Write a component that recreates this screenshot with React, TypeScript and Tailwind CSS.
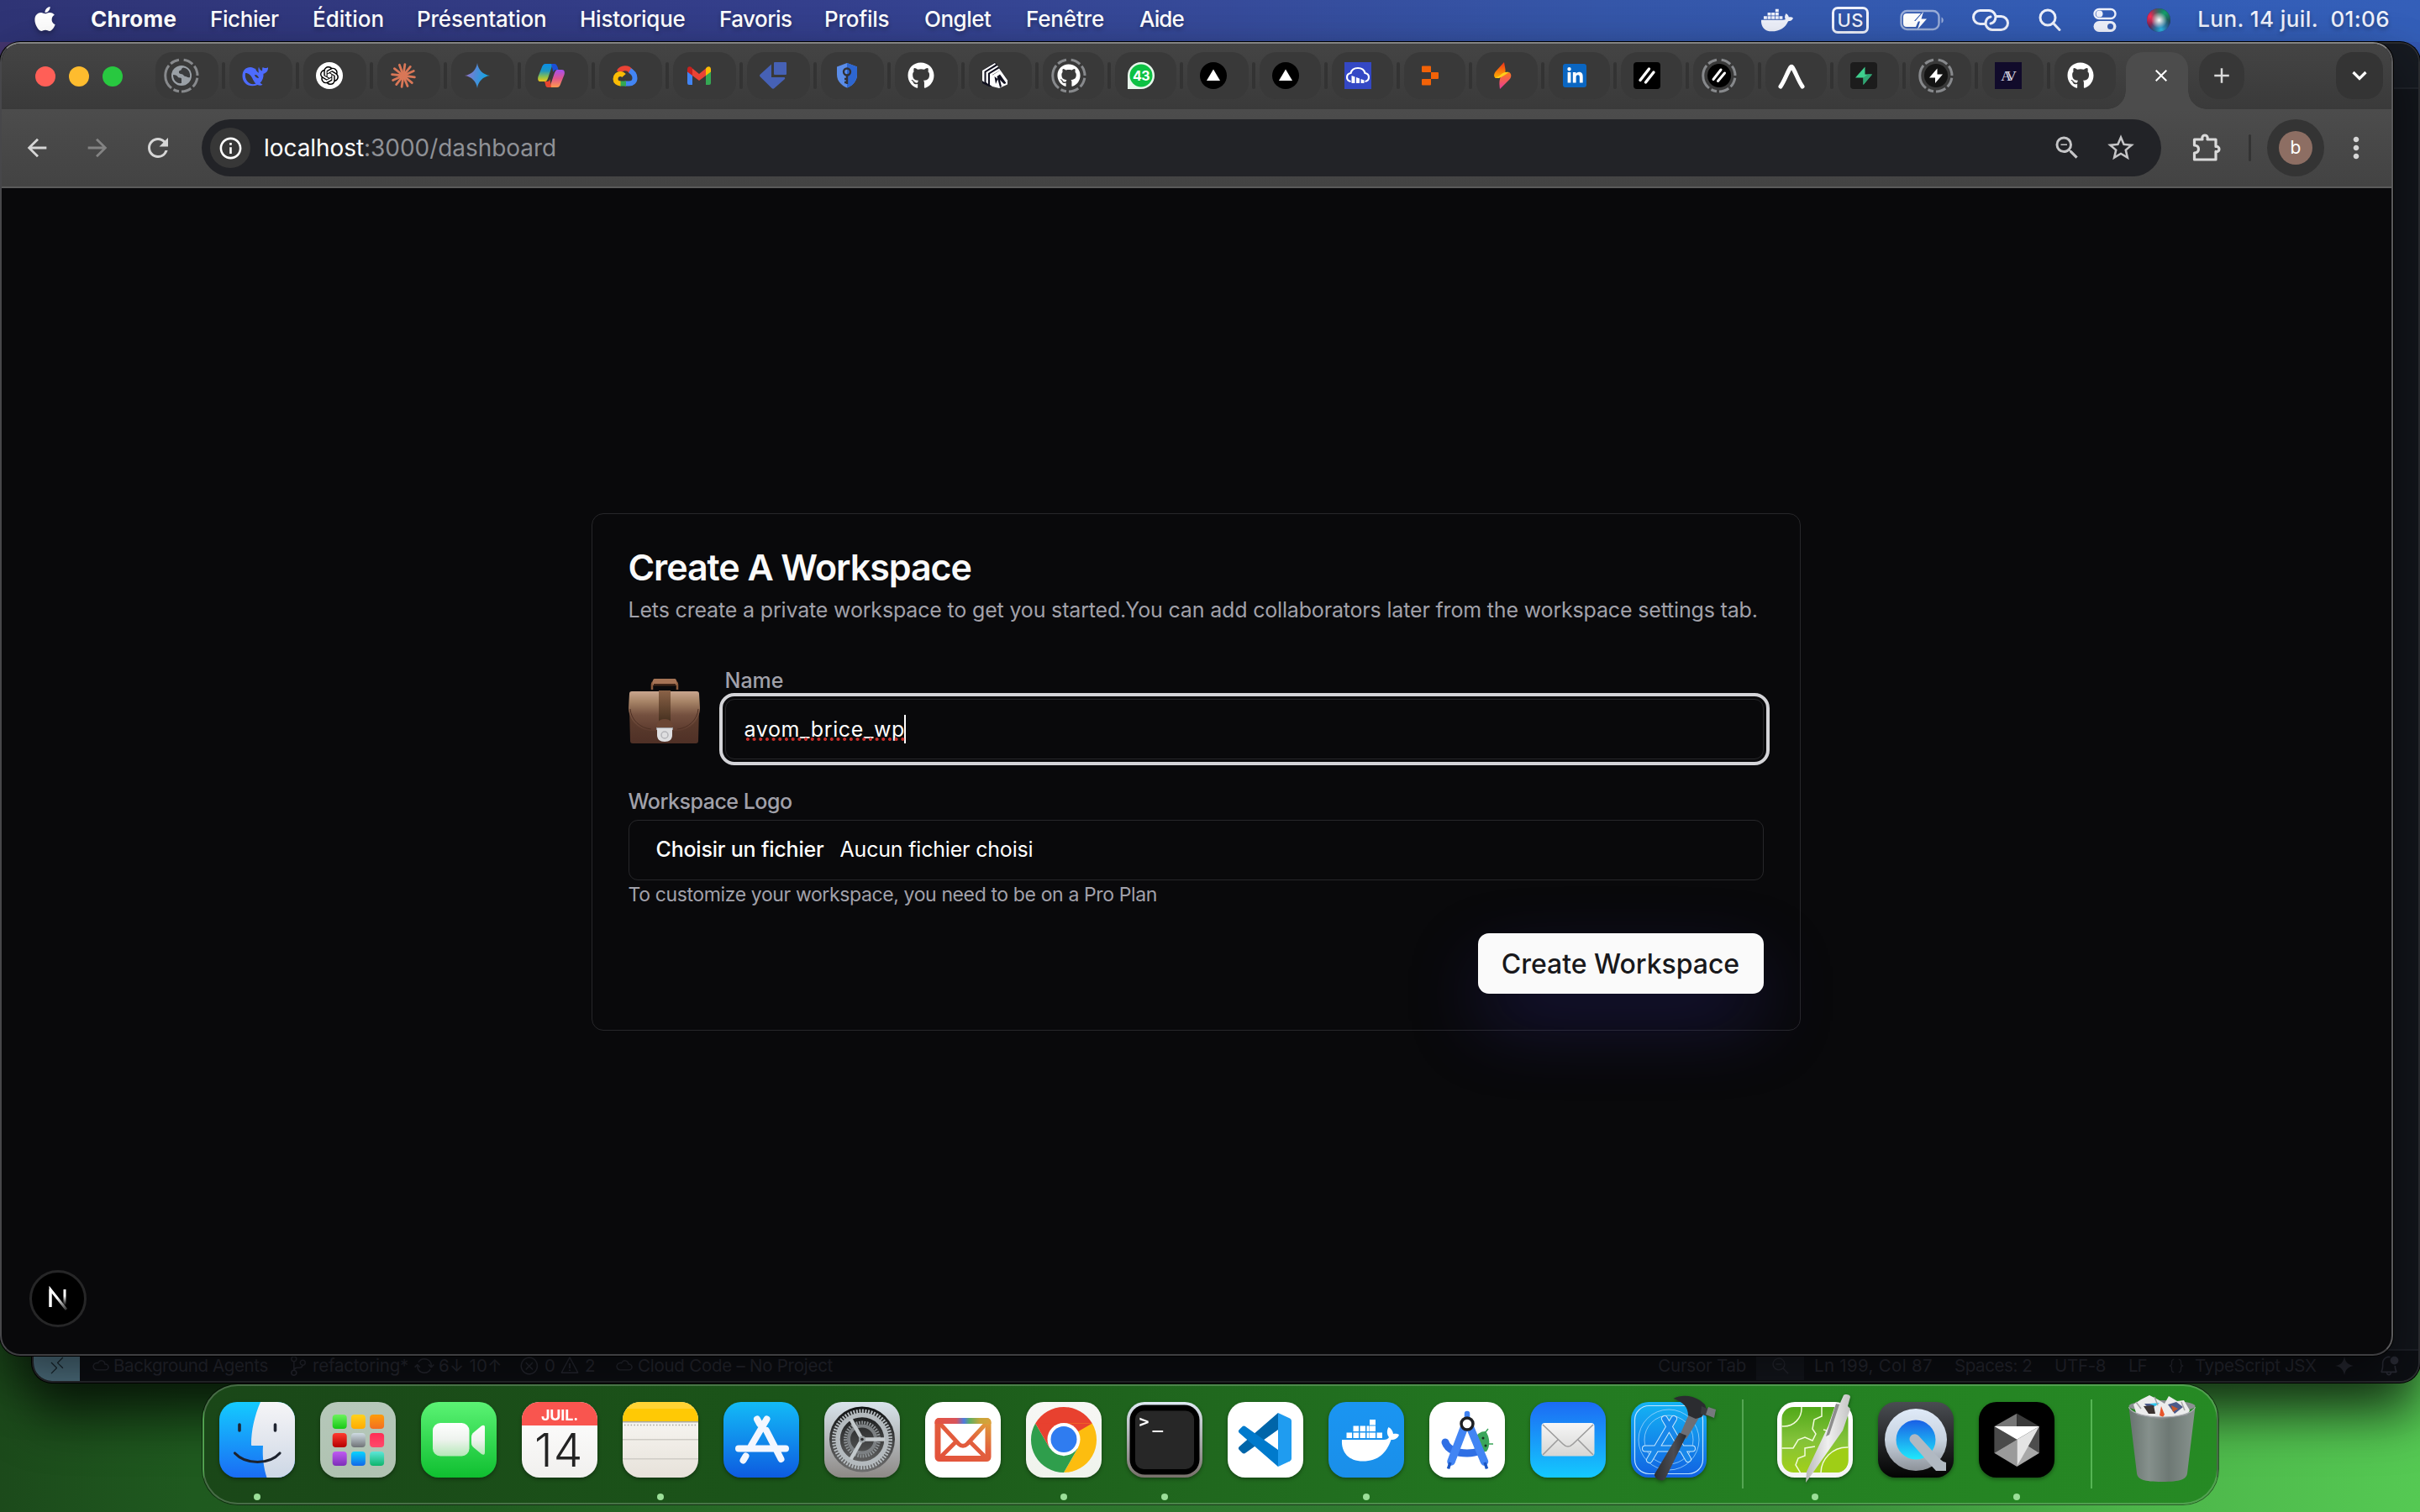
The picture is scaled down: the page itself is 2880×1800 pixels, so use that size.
import type { ReactNode } from "react";
import { FaApple, FaGithub, FaLinkedinIn, FaDocker } from "react-icons/fa";
import { SiOpenai } from "react-icons/si";
import {
  MdArrowBack,
  MdArrowForward,
  MdRefresh,
  MdInfoOutline,
  MdZoomOut,
  MdStarBorder,
  MdMoreVert,
  MdClose,
  MdAdd,
} from "react-icons/md";
import {
  VscRemote,
  VscCloud,
  VscSourceControl,
  VscSync,
  VscError,
  VscWarning,
  VscZoomOut,
  VscJson,
  VscBellDot,
} from "react-icons/vsc";

/* ---------- Menu bar ---------- */

const menus = [
  { label: "Chrome", cls: "w-[142px] font-bold tracking-[0.29px]" },
  { label: "Fichier", cls: "w-[122px] tracking-[-0.39px]" },
  { label: "Édition", cls: "w-[124px] tracking-[0.02px]" },
  { label: "Présentation", cls: "w-[194px] tracking-[-0.21px]" },
  { label: "Historique", cls: "w-[166px] tracking-[-0.26px]" },
  { label: "Favoris", cls: "w-[125px] tracking-[-0.53px]" },
  { label: "Profils", cls: "w-[119px] tracking-[-0.25px]" },
  { label: "Onglet", cls: "w-[121px] tracking-[-0.5px]" },
  { label: "Fenêtre", cls: "w-[135px] tracking-[-0.16px]" },
  { label: "Aide", cls: "w-[60px] tracking-[-0.9px]" },
];

function MenuBar() {
  return (
    <div className="flex h-[50px] w-full items-start bg-[linear-gradient(90deg,#2f3475_0%,#343f8c_33%,#364a99_50%,#3556a8_66%,#335cb4_85%,#345fb9_100%)] text-[26px] font-medium leading-[46px] text-white [text-shadow:0_3px_5px_rgba(0,0,0,0.3)]">
      <div className="w-[108px] pl-[38px] pt-[6px]">
        <FaApple className="h-[33px] w-[31px] drop-shadow-[0_3px_3px_rgba(0,0,0,0.3)]" />
      </div>
      {menus.map((m) => (
        <span key={m.label} className={`block whitespace-nowrap ${m.cls}`}>
          {m.label}
        </span>
      ))}
      <div className="ml-auto flex h-[48px] items-center pr-[36px] text-[#eef1fb]">
        <FaDocker className="mr-[46px] h-[40px] w-[38px]" />
        <div className="mr-[37px] flex h-[32px] w-[44px] items-center justify-center rounded-[7px] border-[3px] border-[#eef1fb] text-[22px] tracking-[0.5px]">
          US
        </div>
        <svg className="mr-[32px]" width="54" height="28" viewBox="0 0 54 28" fill="none">
          <rect x="1.5" y="3" width="45" height="22" rx="7" stroke="#fff" strokeOpacity=".5" strokeWidth="2.4" />
          <path d="M49.5 10.5c3 1 3 6 0 7z" fill="#fff" fillOpacity=".5" />
          <path d="M8 6h17l-8 9h5l-3 7H8a4 4 0 0 1-4-4v-8a4 4 0 0 1 4-4z" fill="#fff" />
          <path d="M28 4 18 15.500h6L21 25l11-12.500h-6.500z" fill="#fff" />
        </svg>
        <svg className="mr-[34px]" width="44" height="28" viewBox="0 0 44 28" fill="none" stroke="#eef1fb" strokeWidth="3" strokeLinecap="round">
          <path d="M15 18.500H9.500a8 8 0 0 1 0-16H20a8 8 0 0 1 7.500 10.500c-.8 2.500-3 4.500-5.500 5" />
          <path d="M29 9.500h5.500a8 8 0 0 1 0 16H24a8 8 0 0 1-7.500-10.500c.8-2.500 3-4.500 5.500-5" />
        </svg>
        <svg className="mr-[38px]" width="28" height="28" viewBox="0 0 28 28" fill="none" stroke="#eef1fb" strokeWidth="3" strokeLinecap="round">
          <circle cx="12" cy="11" r="9" />
          <path d="m18.500 17.500 7.500 8" />
        </svg>
        <svg className="mr-[35px]" width="28" height="30" viewBox="0 0 28 30">
          <rect x="1.500" y="2" width="25" height="11" rx="5.500" fill="none" stroke="#eef1fb" strokeWidth="2.400" />
          <circle cx="7.500" cy="7.500" r="4" fill="#eef1fb" />
          <rect x="0.500" y="16" width="27" height="13" rx="6.500" fill="#eef1fb" />
          <circle cx="20.500" cy="22.500" r="3.500" fill="#3a60b5" />
        </svg>
        <svg className="mr-[31px]" width="30" height="30" viewBox="0 0 30 30">
          <defs>
            <radialGradient id="siriR" cx=".15" cy=".35" r=".6"><stop offset="0" stopColor="#ff2d55" /><stop offset="1" stopColor="#ff2d55" stopOpacity="0" /></radialGradient>
            <radialGradient id="siriG" cx=".75" cy=".2" r=".6"><stop offset="0" stopColor="#12a36c" /><stop offset="1" stopColor="#12a36c" stopOpacity="0" /></radialGradient>
            <radialGradient id="siriB" cx=".6" cy=".9" r=".5"><stop offset="0" stopColor="#2bb8e8" /><stop offset="1" stopColor="#2bb8e8" stopOpacity="0" /></radialGradient>
            <radialGradient id="siriW" cx=".52" cy=".5" r=".34"><stop offset="0" stopColor="#fff" /><stop offset="1" stopColor="#fff" stopOpacity="0" /></radialGradient>
          </defs>
          <circle cx="15" cy="15" r="14" fill="#2a2352" />
          <circle cx="15" cy="15" r="14" fill="url(#siriR)" />
          <circle cx="15" cy="15" r="14" fill="url(#siriG)" />
          <circle cx="15" cy="15" r="14" fill="url(#siriB)" />
          <circle cx="15" cy="15" r="14" fill="url(#siriW)" />
        </svg>
        <span className="-mt-[2px] whitespace-pre tracking-[0.4px]">Lun. 14 juil.{"  "}01:06</span>
      </div>
    </div>
  );
}

/* ---------- Favicons ---------- */

function Ring() {
  return (
    <svg className="absolute -left-[5px] -top-[5px]" width="42" height="42" viewBox="0 0 42 42" fill="none">
      <path d="M18 2.200A19 19 0 0 0 18 39.800" stroke="#87898c" strokeWidth="3" strokeDasharray="11 3 30 3" />
      <circle cx="21" cy="21" r="19" stroke="#87898c" strokeWidth="3" strokeDasharray="11.900 3 11.900 3 11.900 3 11.900 100" transform="rotate(-82 21 21)" />
    </svg>
  );
}

const Sv = ({ children }: { children: ReactNode }) => (
  <svg width="32" height="32" viewBox="0 0 32 32">{children}</svg>
);

const Vercel = () => (
  <Sv>
    <circle cx="16" cy="16" r="16" fill="#000" />
    <path d="M16 8.500 24 22H8z" fill="#fff" />
  </Sv>
);

const Github = () => <FaGithub className="h-[32px] w-[32px] text-white" />;

const favicons: ReactNode[] = [
  <>
    <Ring />
    <Sv>
      <circle cx="16" cy="16" r="12" fill="#9aa0a6" />
      <path d="M6 15c3 0 5 1 6 3 1 1 3 0 4 1.500V25c-5 1-10-3-10-10zM18 6.500c-3 1-1 3-4 3.500-2 1-1 4 1 4 4 0 3 3 6 3 2 0 2 2 5 1 1-5-2-11-8-11.500z" fill="#3a3b3d" />
    </Sv>
  </>,
  <Sv>
    <path d="M20 5.500c.5 2.500 2 4.500 4 5 .5-1.700-.3-3 .8-4.500 1.400 1.500 3.500 1.300 6.200.2.300 4-2 6.800-5.500 7.500.3 4.500-1 8-4 11l3 2c-1.500 1.200-4 1.300-6 .3C9 31 .5 25.500.5 16.500.5 10 4.500 6 10 6c2.500 0 4 1.500 6 1.800l1 2.200c1 1.500 2 2 3 2.800-.5-2.500-1-5 0-7.300z" fill="#4d6bfe" />
    <path d="M4 13c4 0 6.500 2.500 8 5.500s2.500 5.500 4.500 7C10 28.500 2.500 22 4 13z" fill="#393939" />
    <path d="M15 15c2.500-.5 4.500 1.500 5 4-2.500 0-4.500-1.500-5-4z" fill="#393939" />
  </Sv>,
  <div className="flex h-[32px] w-[32px] items-center justify-center rounded-full bg-white text-black">
    <SiOpenai className="h-[22px] w-[22px]" />
  </div>,
  <Sv>
    <g stroke="#d97757" strokeWidth="2.800" strokeLinecap="round">
      {[0, 30, 58, 90, 122, 150, 180, 210, 238, 268, 300, 332].map((a) => (
        <path key={a} d="M16 16V2.500" transform={`rotate(${a + 8} 16 16)`} />
      ))}
    </g>
  </Sv>,
  <Sv>
    <defs><linearGradient id="gem" x1="0" y1=".4" x2="1" y2=".6"><stop offset=".1" stopColor="#8b78cf" /><stop offset=".4" stopColor="#5489d6" /><stop offset=".8" stopColor="#1ba1e3" /></linearGradient></defs>
    <path d="M16 1c1 8 7 14 15 15-8 1-14 7-15 15-1-8-7-14-15-15C9 15 15 9 16 1z" fill="url(#gem)" />
  </Sv>,
  <Sv>
    <defs>
      <linearGradient id="cpA" x1="0" y1="0" x2="0" y2="1"><stop offset="0" stopColor="#0a8fe8" /><stop offset=".4" stopColor="#1c96c0" /><stop offset=".75" stopColor="#8fc14a" /><stop offset="1" stopColor="#f5c518" /></linearGradient>
      <linearGradient id="cpB" x1="0" y1="0" x2="0" y2="1"><stop offset="0" stopColor="#a44ff2" /><stop offset=".5" stopColor="#e0568c" /><stop offset="1" stopColor="#ff9a4d" /></linearGradient>
    </defs>
    <path d="M20 2h-9c-3 0-4 2-5 5L2 17c-1 4 0 6 3 6h5c2 0 3-2 4-5l4-12c.5-2 1-4 2-4z" transform="translate(-1.500 0)" fill="url(#cpA)" />
    <path d="M12 30h9c3 0 4-2 5-5l4-10c1-4 0-6-3-6h-5c-2 0-3 2-4 5l-4 12c-.5 2-1 4-2 4z" transform="translate(1.500 0)" fill="url(#cpB)" />
    <path d="M16 2h4c2 0 3 2 4 5l.5 2H22c-2 0-3 1-3.500 3z" fill="#1b4fd6" />
    <path d="M16 30h-4c-2 0-3-2-3-4l-1-3h3c2 0 3-1 3.500-3z" fill="#e8452f" />
  </Sv>,
  <Sv>
    <g fill="none" strokeWidth="6">
      <path d="M8.500 11.500A8.500 8.500 0 0 1 23 11" stroke="#ea4335" />
      <path d="M23 11c4 2 6 5.500 6 9 0 4-3 6.500-7 6.500h-5" stroke="#4285f4" transform="translate(-1.500 -1)" />
      <path d="M17 25.500H9.500" stroke="#34a853" />
      <path d="M10.500 25.500c-3 0-6-2-6-5.500 0-4 3-6 6-6 1.500 0 3 .8 4 2" stroke="#fbbc04" />
    </g>
  </Sv>,
  <Sv>
    <path d="M2 27V8l6 5v14H4a2 2 0 0 1-2-2z" fill="#4285f4" />
    <path d="M30 27V8l-6 5v14h4a2 2 0 0 0 2-2z" fill="#34a853" />
    <path d="M24 7.500V16l6-4.500V8.500c0-4-4-4.500-6-1z" fill="#fbbc04" />
    <path d="M8 16V7.500l8 6.500 8-6.500V16l-8 6z" fill="#ea4335" />
    <path d="M2 8.500v3L8 16V7.500C6 4 2 5 2 8.500z" fill="#c5221f" />
  </Sv>,
  <Sv>
    <path d="M14 2.500V18h15c1 0 1.500 1 1 2L17.500 31c-1 1-2 1-3 0L.8 17.500c-1-1-1-2 0-3z" fill="#4661b5" />
    <rect x="17" y="0" width="15" height="15" rx="1" fill="#4661b5" />
  </Sv>,
  <Sv>
    <path d="M16 1 28 5.500V15c0 8-6 13-12 15.500C10 28 4 23 4 15V5.500z" fill="#5b8de8" />
    <path d="M16 1 28 5.500V15c0 8-6 13-12 15.500z" fill="#2d66d0" />
    <circle cx="16" cy="11.500" r="4" fill="none" stroke="#303136" strokeWidth="2.400" />
    <path d="M16 15.500V26m0-6h-3m3 4h-3" fill="none" stroke="#303136" strokeWidth="2.400" />
  </Sv>,
  <Github />,
  <Sv>
    <path d="M1 10 16 0l15 21v5l-10 5-8-2H9L1 25z" fill="#10101f" />
    <path d="M1 10 16 1l1 1.500L3.500 11v13L1 22zM5.500 12 19 4l1 1.500L8 13v13l-2.500-2zM10 14 21 7.500l1.500 2L13 15v14l-3-2z" fill="#fff" />
    <path d="m13 15.500 9.500-6L31 21.500v5L21 31l-8-2z" fill="#fff" />
    <path d="m15.500 17 1.500 9 2.500-6zM22 14.500l-3.500 2.500L22 30l2-1-2-8 5 5 2.500-1z" fill="#10101f" />
  </Sv>,
  <>
    <Ring />
    <div className="flex h-[32px] w-[32px] items-center justify-center"><FaGithub className="h-[28px] w-[28px] text-white" /></div>
  </>,
  <div className="relative">
    <Sv>
      <path d="M16 0a16 16 0 1 1 0 32H0V16A16 16 0 0 1 16 0z" fill="#e8f7ec" />
      <circle cx="16" cy="16" r="13.500" fill="#0dc143" />
    </Sv>
    <span className="absolute inset-0 flex items-center justify-center text-[16px] font-bold tracking-[-0.5px] text-white">43</span>
  </div>,
  <Vercel />,
  <Vercel />,
  <Sv>
    <rect width="32" height="32" fill="#3448c5" />
    <path d="M7.500 23c-6-1-6-9 0-10 2-8 15-8 17 0 6 1 6 9 0 10" fill="none" stroke="#fff" strokeWidth="2.200" />
    <path d="M8.500 16v9h4v-7.500zM14 18v7h4v-5.500zM19.500 20v5h4v-3.500z" fill="#fff" />
  </Sv>,
  <Sv>
    <path d="M7 4.500h9a1 1 0 0 1 1 1V12H7a1 1 0 0 1-1-1V5.500a1 1 0 0 1 1-1zM17 12h8a1 1 0 0 1 1 1v6a1 1 0 0 1-1 1h-8zM7 20h10v6.500a1 1 0 0 1-1 1H7a1 1 0 0 1-1-1V21a1 1 0 0 1 1-1z" fill="#f26207" />
  </Sv>,
  <Sv>
    <defs>
      <linearGradient id="fl1" x1="0" y1="0" x2="0" y2="1"><stop offset="0" stopColor="#ef2d1a" /><stop offset="1" stopColor="#ffb400" /></linearGradient>
      <linearGradient id="fl2" x1="0" y1="0" x2="0" y2="1"><stop offset="0" stopColor="#ff7a1a" /><stop offset="1" stopColor="#e83a9a" /></linearGradient>
    </defs>
    <path d="M18 0 8 11c-3 4-2 7 0 8l10-4c3-4 1-8 0-15z" fill="url(#fl1)" />
    <path d="M13 32 24 21c4-4 2-8 0-9l-9 4c-3 4-3 9-2 16z" fill="url(#fl2)" />
    <path d="M7 18c3 2 6 1 9-1s5-3 8-5c-5-1-8 1-10 3s-4 3-7 3z" fill="#ffcf1a" />
  </Sv>,
  <div className="flex h-[32px] w-[32px] items-center justify-center">
    <div className="flex h-[28px] w-[28px] items-center justify-center rounded-[3px] bg-[#0a66c2]">
      <FaLinkedinIn className="h-[21px] w-[21px] text-white" />
    </div>
  </div>,
  <Sv>
    <rect width="32" height="32" rx="4" fill="#000" />
    <path d="M8 21.500 18.500 8M14.500 24 24 12" stroke="#fff" strokeWidth="3.400" strokeLinecap="round" />
  </Sv>,
  <>
    <Ring />
    <Sv>
      <circle cx="16" cy="16" r="14" fill="#000" />
      <path d="M9 20.500 18 9M14.500 22.500l8-9.500" stroke="#fff" strokeWidth="3" strokeLinecap="round" />
    </Sv>
  </>,
  <Sv>
    <path d="M3 29C8 22 11 12 15 6c.6-1 1.500-1 2 0 4 6 7 16 12 23" fill="none" stroke="#fff" strokeWidth="5" strokeLinecap="round" />
  </Sv>,
  <Sv>
    <rect width="32" height="32" rx="4" fill="#1c1c1c" />
    <path d="M17.500 5.500v9H26L15.500 27v-8.500H6z" fill="#3ecf8e" />
    <path d="M15.500 18.500V27L26 14.500h-5z" fill="#30a673" />
  </Sv>,
  <>
    <Ring />
    <Sv>
      <circle cx="16" cy="16" r="14" fill="#141414" />
      <path d="M17.500 7.500v7H24L15 25v-6.500H8z" fill="#fff" />
    </Sv>
  </>,
  <div className="flex h-[32px] w-[32px] items-center justify-center bg-[#110b2b] pr-[3px] font-['Liberation_Serif'] text-[17px] leading-none tracking-[-4px] text-[#d8d6e2]">AV</div>,
  <Github />,
];

/* ---------- Browser chrome ---------- */

function TabStrip() {
  return (
    <div className="flex h-[78px] items-start bg-[linear-gradient(180deg,#444444,#3a3a3a)] pt-[10px]">
      <div className="flex h-[58px] w-[183px] items-center gap-[16px] pl-[40px]">
        <span className="h-[24px] w-[24px] rounded-full bg-[#ff5f57]" />
        <span className="h-[24px] w-[24px] rounded-full bg-[#febc2e]" />
        <span className="h-[24px] w-[24px] rounded-full bg-[#28c840]" />
      </div>
      {favicons.map((f, i) => (
        <div key={i} className="flex items-center">
          <div className={`flex h-[56px] items-center rounded-[20px] bg-[#393939] pl-[15px] ${i < 12 ? "w-[75px]" : "w-[73px]"}`}>
            <div className="relative h-[32px] w-[32px]">{f}</div>
          </div>
          {i < favicons.length - 1 && <span className="ml-[4px] mr-[5px] h-[32px] w-[4px] rounded-full bg-[#333333]" />}
        </div>
      ))}
      <div className="relative ml-[12px] flex h-[68px] w-[74px] items-center justify-center rounded-t-[20px] bg-[#4c4c4c] pb-[12px]">
        <span className="absolute -left-[22px] bottom-0 h-[22px] w-[22px] bg-[radial-gradient(circle_at_0_0,transparent_21.5px,#4c4c4c_22px)]" />
        <span className="absolute -right-[22px] bottom-0 h-[22px] w-[22px] bg-[radial-gradient(circle_at_100%_0,transparent_21.5px,#4c4c4c_22px)]" />
        <MdClose className="ml-[10px] h-[24px] w-[24px] text-white" />
      </div>
      <div className="ml-[13px] flex h-[56px] w-[54px] items-center justify-center rounded-[24px] bg-[#373737]">
        <MdAdd className="h-[30px] w-[30px] text-[#dadada]" />
      </div>
      <div className="ml-auto mr-[10px] flex h-[56px] w-[56px] items-center justify-center rounded-[20px] bg-[#343434]">
        <svg width="18" height="12" viewBox="0 0 18 12" fill="none" stroke="#fff" strokeWidth="3.200"><path d="m1.500 2 7.500 7.500L16.500 2" /></svg>
      </div>
    </div>
  );
}

function Toolbar() {
  return (
    <div className="flex h-[94px] items-center border-b-2 border-[#5a5a5a] bg-[linear-gradient(180deg,#4c4c4c,#434343)] text-[#d6d6d6]">
      <MdArrowBack className="ml-[25px] h-[34px] w-[34px]" />
      <MdArrowForward className="ml-[38px] h-[34px] w-[34px] text-[#838383]" />
      <MdRefresh className="ml-[37px] h-[36px] w-[36px]" />
      <div className="ml-[34px] flex h-[68px] w-[2332px] items-center rounded-full bg-[#222327] pl-[10px]">
        <div className="flex h-[48px] w-[48px] items-center justify-center rounded-full bg-[#373737]">
          <MdInfoOutline className="h-[31px] w-[31px] text-white" />
        </div>
        <span className="ml-[16px] text-[28px] leading-[40px] tracking-[-0.06px] text-[#8f9196]">
          <span className="text-white">localhost</span>:3000/dashboard
        </span>
        <MdZoomOut className="ml-auto mr-[27px] h-[36px] w-[36px] text-[#c5c5c7]" />
        <MdStarBorder className="mr-[29px] h-[38px] w-[38px] text-[#c5c5c7]" />
      </div>
      <svg className="ml-[36px]" width="36" height="36" viewBox="0 0 36 36" fill="none" stroke="#dadada" strokeWidth="3.200" strokeLinejoin="round">
        <path d="M3.500 8h9.500c-.8-2.500.5-5 3-5s3.800 2.500 3 5H29v8.500c2-.6 4 .8 4 3s-2 3.600-4 3V32H3.500v-8c3 0 5-1.800 5-4.500s-2-4.500-5-4.500z" />
      </svg>
      <span className="ml-[32px] h-[32px] w-[3px] rounded bg-[#333]" />
      <div className="ml-[19px] flex h-[68px] w-[68px] items-center justify-center rounded-full bg-[#343434]">
        <div className="flex h-[40px] w-[40px] items-center justify-center rounded-full bg-[#8d6e63] text-[21px] text-white">b</div>
      </div>
      <MdMoreVert className="ml-[18px] h-[40px] w-[40px]" />
    </div>
  );
}

/* ---------- Workspace form ---------- */

function Briefcase() {
  return (
    <svg width="86" height="78" viewBox="0 0 86 78">
      <defs>
        <linearGradient id="bcA" x1="0" y1="0" x2="0" y2="1"><stop offset="0" stopColor="#c9a58e" /><stop offset=".25" stopColor="#a88568" /><stop offset=".6" stopColor="#74503f" /><stop offset="1" stopColor="#5d3b2e" /></linearGradient>
        <linearGradient id="bcB" x1="0" y1="0" x2="0" y2="1"><stop offset="0" stopColor="#6b4a36" /><stop offset="1" stopColor="#4f3026" /></linearGradient>
        <linearGradient id="bcC" x1="0" y1="0" x2="0" y2="1"><stop offset="0" stopColor="#8a6247" /><stop offset="1" stopColor="#46301f" /></linearGradient>
      </defs>
      <path d="M28 13V7c0-2 1-3 3-3M58 13V7c0-2-1-3-3-3" stroke="#8a5a3c" strokeWidth="2.500" fill="none" />
      <path d="M31 0h24c3 0 3 8 1 8H30c-2 0-2-8 1-8z" fill="#a57355" />
      <path d="M30 6h26v2.500H30z" fill="#3d2417" />
      <path d="M3 16h79l2 20-1 38c0 2-1 3-3 3H5c-2 0-3-1-3-3L1 36z" fill="url(#bcB)" />
      <path d="M4 15h77c2 0 3 1 3 3l1 17c0 14-12 26-26 27H26C12 61 0 49 0 35l1-17c0-2 1-3 3-3z" fill="url(#bcA)" />
      <path d="M2 36c1 13 12 23 25 24M83 36c-1 13-12 23-25 24" stroke="#4d3024" strokeWidth="1" fill="none" />
      <path d="M36 14h14v37H36z" fill="url(#bcC)" />
      <path d="M33 60c0-8 3-12 10-12s10 4 10 12z" fill="#6b4634" />
      <path d="M33 58h20v3H33z" fill="#9a9a9e" />
      <path d="M34 59h18v8c0 5-3 8-9 8s-9-3-9-8z" fill="#dedee0" />
      <circle cx="43" cy="67" r="4" fill="none" stroke="#b4b4b8" strokeWidth="1.500" />
    </svg>
  );
}

function WorkspaceCard() {
  return (
    <div className="-ml-[2px] h-[616px] w-[1439px] rounded-[14px] border border-[#27272a] pl-[43px] pr-[43px] pt-[41px] text-[25px] leading-[36px] text-[#a1a1aa]">
      <h1 className="h-[44px] text-[43px] font-semibold leading-[44px] tracking-[-1.07px] text-[#fafafa]">Create A Workspace</h1>
      <p className="mt-[11px] whitespace-nowrap tracking-[-0.17px]">
        Lets create a private workspace to get you started.You can add collaborators later from the workspace settings tab.
      </p>
      <div className="mt-[48px] flex">
        <div className="w-[115px] pt-[16px]">
          <Briefcase />
        </div>
        <div className="flex-1">
          <label className="block font-medium tracking-[0px]">Name</label>
          <div className="mt-[4px] flex h-[72px] items-center rounded-[11px] border border-[#27272a] pl-[22px] leading-[34px] text-white outline-4 outline-offset-[3.5px] outline-[#d4d4d8]">
            <span className="relative tracking-[0.6px]">
              avom_brice_wp
              <span className="absolute bottom-[3px] left-0 h-[4px] w-full bg-[radial-gradient(circle,#c9302c_1.8px,transparent_2.2px)] bg-[length:7.7px_4px]" />
            </span>
            <span className="-ml-[1px] h-[34px] w-[2px] bg-white" />
          </div>
        </div>
      </div>
      <label className="mt-[32px] block font-medium tracking-[-0.49px]">Workspace Logo</label>
      <div className="mt-[4px] flex h-[72px] items-center rounded-[11px] border border-[#27272a] pb-[3px] pl-[32px] text-white">
        <span className="font-medium tracking-[-0.2px]">Choisir un fichier</span>
        <span className="ml-[19px] tracking-[-0.19px]">Aucun fichier choisi</span>
      </div>
      <p className="mt-[1px] text-[23px] leading-[32px] tracking-[-0.38px]">To customize your workspace, you need to be on a Pro Plan</p>
      <div className="mt-[30px] flex justify-end">
        <button className="h-[72px] w-[340px] rounded-[13px] bg-[#fafafa] text-[32px] font-medium leading-[71px] tracking-[-0.03px] text-[#18181b] shadow-[0_36px_90px_-8px_rgba(55,48,163,0.38)]">
          Create Workspace
        </button>
      </div>
    </div>
  );
}

function Browser() {
  return (
    <div className="absolute left-0 top-[50px] flex h-[1564px] w-[2848px] flex-col overflow-hidden rounded-[24px] border-2 border-b-[#3e3e41] border-l-[#47474a] border-r-[#5a5a5c] border-t-[#838383] bg-[#09090b] shadow-[0_0_0_1px_#000,0_30px_60px_rgba(0,0,0,0.5)]">
      <TabStrip />
      <Toolbar />
      <div className="relative flex flex-1 justify-center pt-[387px]">
        <WorkspaceCard />
        <div className="absolute bottom-[32px] left-[33px] flex h-[68px] w-[68px] items-center justify-center rounded-full border-[3px] border-[#262627] bg-black">
          <svg width="26" height="30" viewBox="0 0 26 30" fill="none">
            <defs>
              <linearGradient id="nA" x1="0" y1="0" x2="0" y2="1"><stop offset=".4" stopColor="#fff" /><stop offset="1" stopColor="#fff" stopOpacity="0" /></linearGradient>
              <linearGradient id="nB" gradientUnits="userSpaceOnUse" x1="12" y1="14" x2="24" y2="30"><stop offset="0" stopColor="#fff" /><stop offset="1" stopColor="#fff" stopOpacity=".1" /></linearGradient>
            </defs>
            <path d="M4 25V4l19 24" stroke="url(#nB)" strokeWidth="3" />
            <path d="M4 25V4" stroke="#fff" strokeWidth="3" />
            <rect x="19.500" y="4" width="3" height="19" fill="url(#nA)" />
          </svg>
        </div>
      </div>
    </div>
  );
}

/* ---------- Editor window behind the browser ---------- */

function EditorWindow() {
  return (
    <div className="absolute left-[38px] top-[50px] flex h-[1596px] w-[2842px] flex-col justify-between overflow-hidden rounded-[24px] border-2 border-[#2b2d31] bg-[#12151b] shadow-[0_0_0_1px_#000,0_40px_60px_rgba(0,0,0,0.6)]">
      <div className="h-[54px] border-b-2 border-[#20242b] bg-[#161a21]" />
      <div className="flex h-[38px] items-center border-t-2 border-[#1c1f26] bg-[#0d0f14] text-[20.5px] leading-[30px] text-[#2a2c36]">
        <div className="flex h-[36px] w-[55px] items-center justify-center bg-[#54798a]">
          <VscRemote className="h-[24px] w-[24px] text-[#1b2a33]" />
        </div>
        <VscCloud className="ml-[14px] h-[22px] w-[22px]" />
        <span className="ml-[4px] w-[208px] tracking-[-0.38px]">Background Agents</span>
        <VscSourceControl className="h-[24px] w-[24px] shrink-0" />
        <span className="ml-[5px] w-[121px] tracking-[-0.2px]">refactoring*</span>
        <VscSync className="h-[24px] w-[24px] shrink-0" />
        <span className="ml-[5px] w-[96px] tracking-[0.3px]">6↓ 10↑</span>
        <VscError className="h-[24px] w-[24px] shrink-0" />
        <span className="ml-[6px] w-[18px]">0</span>
        <VscWarning className="h-[24px] w-[24px] shrink-0" />
        <span className="ml-[6px] w-[36px]">2</span>
        <VscCloud className="h-[22px] w-[22px] shrink-0" />
        <span className="ml-[5px] tracking-[-0.25px]">Cloud Code – No Project</span>
        <span className="ml-auto tracking-[-0.25px]">Cursor Tab</span>
        <div className="ml-[12px] flex h-[34px] w-[57px] items-center justify-center bg-[#15181f]">
          <VscZoomOut className="h-[22px] w-[22px]" />
        </div>
        <span className="ml-[12px] w-[167px] tracking-[0.3px]">Ln 199, Col 87</span>
        <span className="w-[119px] tracking-[-0.4px]">Spaces: 2</span>
        <span className="w-[88px] tracking-[-0.3px]">UTF-8</span>
        <span className="w-[46px] tracking-[-1px]">LF</span>
        <VscJson className="h-[22px] w-[22px]" />
        <span className="ml-[11px] w-[166px] tracking-[-0.35px]">TypeScript JSX</span>
        <svg width="24" height="24" viewBox="0 0 24 24" fill="currentColor"><path d="M12 1c1 6 4 10 11 11-7 1-10 5-11 11-1-6-4-10-11-11 7-1 10-5 11-11z" /></svg>
        <VscBellDot className="ml-[28px] mr-[22px] h-[26px] w-[26px]" />
      </div>
    </div>
  );
}

/* ---------- Dock ---------- */

function Grad({ id, from, to, mid }: { id: string; from: string; to: string; mid?: string }) {
  return (
    <linearGradient id={id} x1="0" y1="0" x2="0" y2="1">
      <stop offset="0" stopColor={from} />
      {mid && <stop offset=".5" stopColor={mid} />}
      <stop offset="1" stopColor={to} />
    </linearGradient>
  );
}

function Tile({ id, from, to, children }: { id: string; from: string; to: string; children?: ReactNode }) {
  return (
    <svg className="overflow-visible drop-shadow-[0_2px_2px_rgba(0,0,0,0.35)]" width="90" height="90" viewBox="0 0 90 90">
      <defs>
        <Grad id={id} from={from} to={to} />
        <clipPath id={`${id}c`}><rect width="90" height="90" rx="21" /></clipPath>
      </defs>
      <rect width="90" height="90" rx="21" fill={`url(#${id})`} />
      {children}
    </svg>
  );
}

const pads = [
  ["#6cf25c", "#16c916"], ["#ffd21e", "#ffab00"], ["#ff9d0a", "#f26f21"],
  ["#ff3b30", "#b50000"], ["#cfdbe3", "#6f7376"], ["#ff2d55", "#ff4a6b"],
  ["#bf5af2", "#7d2fb8"], ["#0ad4ff", "#1268e8"], ["#5ce6d8", "#0fb56c"],
];

const icons: { icon: ReactNode; dot?: boolean }[] = [
  {
    dot: true,
    icon: (
      <Tile id="fi" from="#14cbff" to="#1a6cf4">
        <defs><Grad id="fi2" from="#f6f5f7" to="#cdd7e5" /></defs>
        <path clipPath="url(#fic)" d="M49 0C42 16 38 34 38 50c0 2 0 2 2 2h12c-1 14 1 27 4.500 38H90V0z" fill="url(#fi2)" />
        <path d="M24 27v7M66.500 27v7" stroke="#1f2430" strokeWidth="3.600" strokeLinecap="round" />
        <path d="M18.500 61c13 14 41 14 53.500 0" fill="none" stroke="#1c222d" strokeWidth="3.200" strokeLinecap="round" />
      </Tile>
    ),
  },
  {
    icon: (
      <Tile id="lp" from="#b6c8ba" to="#afc2b1">
        {pads.map(([a, b], i) => (
          <g key={i}>
            <defs><Grad id={`pad${i}`} from={a} to={b} /></defs>
            <rect x={14.700 + (i % 3) * 22.200} y={15 + Math.floor(i / 3) * 22} width="17" height="17" rx="4" fill={`url(#pad${i})`} />
          </g>
        ))}
      </Tile>
    ),
  },
  {
    icon: (
      <Tile id="ft" from="#5bf374" to="#0fbf30">
        <defs><Grad id="ft2" from="#ffffff" to="#b5e8b8" mid="#eef3ee" /></defs>
        <rect x="14" y="25" width="43.500" height="39.500" rx="9" fill="url(#ft2)" />
        <path d="M60 42c0-3 1-4 3-6l9-7.500c2-1.500 4-1 4 1.500v30c0 3-2 3.500-4 2l-9-7.500c-2-2-3-3-3-6z" fill="url(#ft2)" />
      </Tile>
    ),
  },
  {
    icon: (
      <Tile id="ca" from="#ffffff" to="#f1f0ee">
        <path clipPath="url(#cac)" d="M0 0h90v28H0z" fill="#f9554f" />
        <text x="45" y="22" textAnchor="middle" fontFamily="Inter" fontWeight="700" fontSize="18" letterSpacing="-.2" fill="#fff">JUIL.</text>
        <text x="15" y="76.500" fontFamily="Inter" fontWeight="300" fontSize="55" letterSpacing="1" fill="#232323">14</text>
      </Tile>
    ),
  },
  {
    dot: true,
    icon: (
      <Tile id="no" from="#fbfaf7" to="#e7e2da">
        <path clipPath="url(#noc)" d="M0 0h90v23H0z" fill="#ffc905" />
        <path clipPath="url(#noc)" d="M0 0h90v8H0z" fill="#ffdb52" fillOpacity=".6" />
        <path d="M0 23.700h90" stroke="#a9a79f" strokeWidth="1.500" />
        <path d="M2 27.500h86" stroke="#a9a79f" strokeWidth="1.500" strokeDasharray="1.500 2.300" />
        <path d="M0 44.700h90M0 67.700h90" stroke="#cfccc6" strokeWidth="1.500" />
      </Tile>
    ),
  },
  {
    icon: (
      <Tile id="as" from="#13bbf7" to="#0d5be0">
        <g stroke="#f3f7ff" strokeWidth="8" strokeLinecap="round">
          <path d="M40 20.500 43 26M51 34l17.500 34M18 55.500h56M51.500 20.500 33 52M26.500 64.500l-3 5" />
        </g>
      </Tile>
    ),
  },
  {
    icon: (
      <Tile id="se" from="#d9e4ec" to="#8d8986">
        <defs><Grad id="se2" from="#0f1112" to="#6e6e6e" /></defs>
        <circle cx="45" cy="44.500" r="39" fill="url(#se2)" />
        <g fill="none" stroke="#b4babe">
          <circle cx="45" cy="44.500" r="33.500" strokeWidth="5" strokeDasharray="2 1.500" />
          <circle cx="45" cy="44.500" r="29" strokeWidth="5.500" />
          <circle cx="45" cy="44.500" r="20" strokeWidth="4" stroke="#8d9295" strokeDasharray="1.800 1.400" />
          <circle cx="45" cy="44.500" r="16" strokeWidth="4" stroke="#7c8083" />
          <path d="M45 44.500h27M45 44.500 31.500 20.500M45 44.500 31.500 68" strokeWidth="4.500" stroke="#c3c9cc" />
        </g>
        <circle cx="45" cy="44.500" r="4" fill="#9aa0a3" />
        <circle cx="45" cy="44.500" r="1.800" fill="#2b2b2b" />
      </Tile>
    ),
  },
  {
    icon: (
      <Tile id="gm" from="#ffffff" to="#ffffff">
        <defs>
          <linearGradient id="gmT"><stop offset="0" stopColor="#e4543f" /><stop offset=".38" stopColor="#d9535a" /><stop offset=".52" stopColor="#4d7be0" /><stop offset=".62" stopColor="#5fae62" /><stop offset=".8" stopColor="#c4a63a" /><stop offset="1" stopColor="#dba03a" /></linearGradient>
          <linearGradient id="gmS" x1="0" y1="1" x2="1" y2="0"><stop offset="0" stopColor="#e3523b" /><stop offset=".6" stopColor="#e25f3d" /><stop offset="1" stopColor="#e0a03a" /></linearGradient>
        </defs>
        <rect x="15" y="22.500" width="60" height="45" rx="2" fill="none" stroke="url(#gmS)" strokeWidth="7" />
        <path d="m16 24 24 26c3 3 7 3 10 0l24-26M17 67l19-19M73 67 54 48" fill="none" stroke="url(#gmS)" strokeWidth="5" />
        <path d="M11.500 26v-2a5 5 0 0 1 5-5h57a5 5 0 0 1 5 5v2z" fill="url(#gmT)" />
      </Tile>
    ),
  },
  {
    dot: true,
    icon: (
      <Tile id="ch" from="#f7f7f5" to="#eff3ec">
        <path d="M45 45 11.200 25.500A39 39 0 0 1 78.800 25.500z" fill="#e8412f" />
        <path d="M45 25.500h33.800A39 39 0 0 1 45 84L62 54.500z" fill="#fdbd0f" />
        <path d="M11.200 25.500A39 39 0 0 0 45 84l16.900-29.500L45 64.500 28 54.500z" fill="#2f9e4c" />
        <path d="M11.200 25.500h67.600L45 45 28 54.500z" fill="#e8412f" />
        <circle cx="45" cy="44.500" r="19.500" fill="#fff" />
        <circle cx="45" cy="44.500" r="15.500" fill="#2f7cf0" />
      </Tile>
    ),
  },
  {
    dot: true,
    icon: (
      <Tile id="te" from="#dfeaf3" to="#77706a">
        <rect x="3.500" y="3.500" width="83" height="83" rx="18" fill="#000" />
        <rect x="10" y="10.500" width="70" height="69.500" rx="10" fill="#272727" />
        <text x="14.500" y="29.500" fontFamily="DejaVu Sans Mono" fontWeight="700" fontSize="20" fill="#fff">&gt;</text>
        <text x="30.500" y="31" fontFamily="DejaVu Sans Mono" fontWeight="700" fontSize="21" fill="#fff">_</text>
      </Tile>
    ),
  },
  {
    icon: (
      <Tile id="vs" from="#ffffff" to="#ffffff">
        <path d="M60 13 14 53c-1.500 1.300-1.500 3 0 4.200l3.500 3.500c1 .9 2.500 1 3.700.1L60 33z" fill="#0065a9" />
        <path d="M60 77 14 37c-1.500-1.300-1.500-3 0-4.200l3.500-3.500c1-.9 2.500-1 3.700-.1L60 57z" fill="#007acc" />
        <path d="M60 13l14 6.500c1.500.8 2 2 2 3.500v44c0 1.500-.5 2.700-2 3.500L60 77z" fill="#1f9cf0" />
      </Tile>
    ),
  },
  {
    dot: true,
    icon: (
      <Tile id="do" from="#1a95f2" to="#1a8fe9">
        <g fill="#fff">
          <rect x="49" y="21" width="7" height="6.500" />
          <path d="M29.500 28.500h6.500V35h-6.500zM37.500 28.500H44V35h-6.500zM45.500 28.500h3V35h-3zM49 28.500h7V35h-7z" />
          <path d="M21.500 36.500H28V43h-6.500zM29.500 36.500h6.500V43h-6.500zM37.500 36.500H44V43h-6.500zM45.500 36.500h3V43h-3zM49 36.500h7V43h-7zM57.500 36.500h6.500V43h-6.500z" />
          <path d="M16 45h50c3 0 5-1 6-3-3-4-2.500-8.500-.5-12 3.500 2 5 4.500 5.500 8 3-.5 5.500 0 7 1-1.500 4-4.500 6-9.500 6C69 61 59 70.500 41 70.500 24 70.500 15 60 16 45z" />
        </g>
      </Tile>
    ),
  },
  {
    icon: (
      <Tile id="an" from="#ffffff" to="#ffffff">
        <path d="M58 60a14 14 0 0 1 9-25c5 6 6 18 1 24z" fill="#3ba55a" />
        <path d="m66 37 4-5M71 50h5M63 45l2 1" stroke="#3ba55a" strokeWidth="1.500" />
        <circle cx="64" cy="43" r="1.500" fill="#16321f" /><circle cx="67" cy="52" r="1.500" fill="#16321f" />
        <path d="M19 48c3 9 14 13 26 13 6 0 11-1 15-3" fill="none" stroke="#2f6fe4" strokeWidth="9" strokeLinecap="round" />
        <path d="M42 29 26 71M48 29l17.500 42" stroke="#4285f4" strokeWidth="9.500" strokeLinecap="round" />
        <path d="m25 72-2.500 7.500M66 72l2.500 7.500" stroke="#1a56c4" strokeWidth="3.500" />
        <path d="M45 14v7" stroke="#3f82f2" strokeWidth="6.500" strokeLinecap="round" />
        <circle cx="45" cy="26" r="7" fill="#fff" stroke="#1d1f23" strokeWidth="3.500" />
      </Tile>
    ),
  },
  {
    icon: (
      <Tile id="ma" from="#1c6bf4" to="#14c9fe">
        <defs><Grad id="ma2" from="#f6f6f6" to="#d6d6d4" /></defs>
        <rect x="13.500" y="25" width="63" height="39.500" rx="4" fill="url(#ma2)" />
        <path d="m15 27 24 23c4 4 8 4 12 0l24-23M15 63l18-18M75 63 57 45" fill="none" stroke="#9c9c9c" strokeWidth="1.600" />
      </Tile>
    ),
  },
  {
    icon: (
      <Tile id="xc" from="#14b4f4" to="#1161e2">
        <defs>
          <linearGradient id="xcH" x1="0" y1="0" x2="1" y2="0"><stop offset="0" stopColor="#2c2d31" /><stop offset=".6" stopColor="#4b4c52" /><stop offset="1" stopColor="#2a2b2f" /></linearGradient>
        </defs>
        <rect x="4.500" y="4.500" width="81" height="81" rx="17" fill="none" stroke="#bfe5ff" strokeWidth="1.200" />
        <g fill="none" stroke="#9fd6fb" strokeWidth=".8"><circle cx="45" cy="45" r="36" /><circle cx="45" cy="45" r="29" /></g>
        <g strokeLinecap="round" strokeWidth="8" stroke="#c9e8fd">
          <path d="M40 20 68 68M51 20 22 69M17 55.500h56" />
        </g>
        <g strokeLinecap="round" strokeWidth="6" stroke="#1887ea">
          <path d="M40 20 68 68M51 20 22 69M17 55.500h56" />
        </g>
        <path d="M70 12l12 5-16 27-8-4z" fill="#6d6f75" />
        <path d="M57.500 36.500l8.500 3.500L41 91c-2 5-14 1-13-5z" fill="url(#xcH)" />
        <path d="M50.500-4C60-9 72-8 82-2l6 5 2 6-6 9-7 2-9-4C68 6 62 0 50.500-4z" fill="#2b2c30" />
        <path d="m84 5 9 4-3 8-7-3z" fill="#3a3b40" />
        <path d="m92 6 9 3-2 10-10-4z" fill="#77797e" />
      </Tile>
    ),
  },
];

const recents: { icon: ReactNode; dot?: boolean }[] = [
  {
    dot: true,
    icon: (
      <Tile id="co" from="#ffffff" to="#f4f4f4">
        <defs>
          <Grad id="co2" from="#4fa818" to="#a3d018" mid="#83c23a" />
          <clipPath id="coi"><rect x="5.500" y="6" width="79" height="78" rx="14" /></clipPath>
          <linearGradient id="pen"><stop offset="0" stopColor="#b9b9b9" /><stop offset=".5" stopColor="#f0f0f0" /><stop offset="1" stopColor="#c4c4c4" /></linearGradient>
        </defs>
        <g clipPath="url(#coi)">
          <rect x="5" y="5" width="80" height="80" fill="url(#co2)" />
          <path d="M53 5v12l-9 4-2 11 4 6-4 8-9-4-8 3-6 10-14 0M80 26l-14 1-3 8-8-2M28 85l-6-10 3-8 8-3 0-9 12-2" fill="none" stroke="#f2fbdc" strokeWidth="1.500" />
          <circle cx="8" cy="8" r="21" fill="none" stroke="#f2fbdc" strokeWidth="1.500" />
          <circle cx="83" cy="85" r="31" fill="#9fce16" stroke="#f2fbdc" strokeWidth="1.500" />
        </g>
        <path d="M79-8c2-2 8-1 8 2l-3 11 3 3-9 26L42 85l-8 11 1-13L61 28l8-24 6-3z" fill="url(#pen)" />
        <path d="m70 2 4 1-12 36-4 2z" fill="#8d8d8d" />
      </Tile>
    ),
  },
  {
    icon: (
      <Tile id="qt" from="#4a4d52" to="#030303">
        <defs><Grad id="qt2" from="#dfeaf8" to="#8d9299" mid="#c8d3e0" /><Grad id="qt3" from="#1a5fe6" to="#1fe9fb" /></defs>
        <circle cx="45" cy="45" r="37" fill="url(#qt2)" />
        <circle cx="45" cy="45" r="23.500" fill="url(#qt3)" />
        <path d="M39 48c-5-6 4-14 10-7l20 22c5 5 7 8 12 9v10H69L60 72z" fill="#b1b9c2" />
      </Tile>
    ),
  },
  {
    dot: true,
    icon: (
      <Tile id="cu" from="#000000" to="#000000">
        <path d="M18.400 29 45.300 13.700V29z" fill="#767676" />
        <path d="M45.300 13.700 72 29H45.300z" fill="#3a3a3a" />
        <path d="M18.400 29 45.300 44.700 18.400 60.700z" fill="#4a4a4a" />
        <path d="M18.400 60.700 45.300 44.700V77z" fill="#9a9a9a" />
        <path d="M72 29v31.700L58 52z" fill="#4d4d4d" />
        <path d="m58 52 14 8.700L45.300 77z" fill="#a8a8a8" />
        <path d="M72 29 45.300 44.700V77z" fill="#e4e4e4" />
        <path d="M18.400 29H72L45.300 44.700z" fill="#fff" />
      </Tile>
    ),
  },
];

function Trash() {
  return (
    <svg className="overflow-visible" width="90" height="90" viewBox="0 0 90 90">
      <defs>
        <linearGradient id="tr"><stop offset="0" stopColor="#6d7174" /><stop offset=".3" stopColor="#8d9194" /><stop offset=".6" stopColor="#73777a" /><stop offset="1" stopColor="#8f9396" /></linearGradient>
      </defs>
      <ellipse cx="45" cy="5" rx="39.500" ry="7" fill="#8b9092" />
      <path d="M11 3 20-3l10-5 10 5 8 5 5-9 10 6 8-1 7 12-3 6-30 5-30-5z" fill="#ececec" />
      <path d="m24 2 14 0-6 9zM52 3l10-3 8 6-10 8z" fill="#4c5a8a" />
      <path d="m23 5 12-1 2 10-8 0z" fill="#3b3230" /><path d="m30 2 12-1-5 4z" fill="#2cc4ea" />
      <path d="m44 5 4 10-2 3-4-2z" fill="#e8552c" /><path d="m56 4 8 4-6 4z" fill="#c4562a" />
      <path d="M14 0l6 8M36-6l4 10M68 0l4 10" stroke="#a5a5a5" strokeWidth="1.500" />
      <path d="M5.500 6c6 16 73 16 79 0L75 85c-1 7-8 10-30 10s-29-3-30-10z" fill="url(#tr)" fillOpacity=".93" />
      <path d="M5.500 6c6 16 73 16 79 0" fill="none" stroke="#abb0b2" strokeWidth="1.200" />
    </svg>
  );
}

function DockItem({ icon, dot }: { icon: ReactNode; dot?: boolean }) {
  return (
    <div className="relative h-[90px] w-[90px]">
      {icon}
      {dot && <span className="absolute -bottom-[27px] left-[41px] h-[8px] w-[8px] rounded-full bg-[#9bdf98]" />}
    </div>
  );
}

function Dock() {
  return (
    <div className="absolute left-[241px] top-[1648px] flex h-[143px] w-[2399px] items-start gap-[30px] rounded-[42px] border-2 border-white/20 bg-[linear-gradient(90deg,#1a4718_0%,#1b5519_30%,#20681e_50%,#237a21_68%,#268a24_100%)] pl-[18px] pt-[19px] shadow-[0_0_0_1px_rgba(0,0,0,0.5)]">
      {icons.map((d, i) => (
        <DockItem key={i} {...d} />
      ))}
      <span className="-mt-[3px] ml-[12px] mr-[10px] h-[106px] w-[2px] bg-[#55a553]" />
      {recents.map((d, i) => (
        <DockItem key={i} {...d} />
      ))}
      <span className="-mt-[3px] ml-[13px] mr-[8px] h-[106px] w-[2px] bg-[#55b553]" />
      <Trash />
    </div>
  );
}

export default function App() {
  return (
    <div className="relative h-[1800px] w-[2880px] overflow-hidden bg-[linear-gradient(90deg,#1c4a1b_0%,#1f5a1f_8%,#205c20_20%,#2a6f29_35%,#2f7a30_55%,#3a8c3a_75%,#4cb449_88%,#55c953_100%)] font-['Inter',sans-serif]">
      <div className="absolute inset-x-0 top-0 h-[110px] bg-[linear-gradient(90deg,#45366f,#3459b4)]" />
      <div className="relative">
        <MenuBar />
      </div>
      <EditorWindow />
      <Browser />
      <Dock />
    </div>
  );
}
